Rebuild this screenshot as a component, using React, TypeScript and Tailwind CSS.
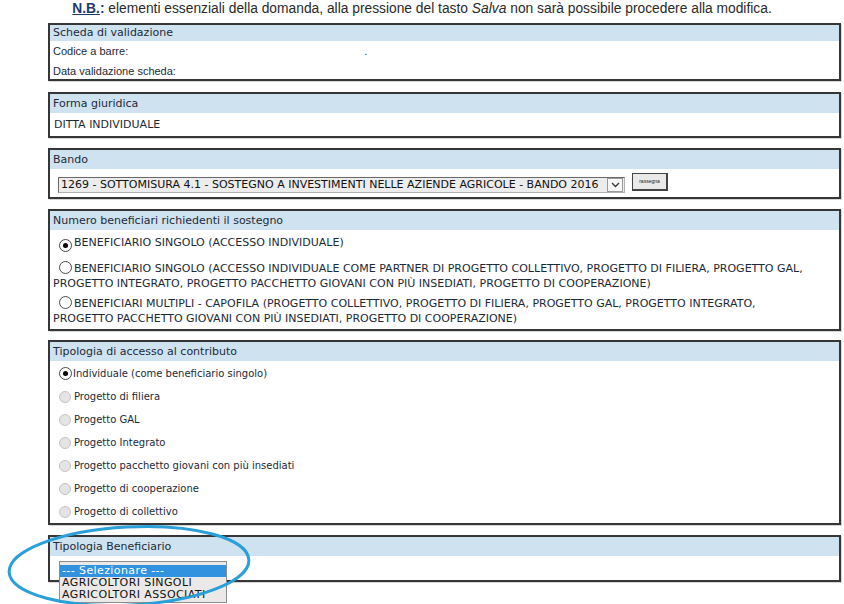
import React from "react";

function Radio({ checked = false, disabled = false }: { checked?: boolean; disabled?: boolean }) {
  if (disabled) {
    return (
      <span className="inline-block w-[12px] h-[12px] rounded-full border border-[#c4c4c4] bg-[#e4e4e4] shrink-0" />
    );
  }
  return (
    <span className="inline-flex items-center justify-center w-[13px] h-[13px] rounded-full border border-[#4a4a4a] bg-white shrink-0 align-[-2px]">
      {checked && <span className="block w-[5px] h-[5px] rounded-full bg-black" />}
    </span>
  );
}

function Box({ title, children, headerH = "h-[19px] leading-[19px]", extra = "" }: { title: string; children?: React.ReactNode; headerH?: string; extra?: string }) {
  return (
    <div className={"border-2 border-[#363636] bg-white shadow-[1px_1px_0_#d6d6d6] " + extra}>
      <div className={"bg-[#cfe2f0] pl-[3px] text-[11px] text-[#1c2a38] font-['DejaVu_Sans',sans-serif] " + headerH}>
        {title}
      </div>
      {children}
    </div>
  );
}

const accesso = [
  "Progetto di filiera",
  "Progetto GAL",
  "Progetto Integrato",
  "Progetto pacchetto giovani con più insediati",
  "Progetto di cooperazione",
  "Progetto di collettivo",
];

export default function App() {
  return (
    <div className="relative w-[844px] h-[604px] overflow-hidden bg-white">
      <div className="h-[18px] text-center text-[13.8px] leading-[18px] text-[#2a2a2a] font-['Liberation_Sans',Arial,sans-serif]">
        <span className="font-bold underline text-[#1d3a6b]">N.B.</span>
        <span className="font-bold text-[#1d3a6b]">:</span> elementi essenziali della domanda, alla pressione del tasto <i>Salva</i> non sarà possibile procedere alla modifica.
      </div>

      <div className="ml-[48px] mt-[5px] w-[793px] flex flex-col">
        {/* Scheda di validazione */}
        <Box title="Scheda di validazione" headerH="h-[16px] leading-[16px]">
          <div className="pl-[3px] text-[11px] text-[#1c2a38] font-['Liberation_Sans',Arial,sans-serif]">
            <div className="h-[20px] leading-[20px] flex">
              <span>Codice a barre:</span>
              <span className="ml-[236px]">.</span>
            </div>
            <div className="h-[18px] leading-[20px]">Data validazione scheda:</div>
          </div>
        </Box>

        {/* Forma giuridica */}
        <div className="mt-[11px]">
          <Box title="Forma giuridica">
            <div className="h-[23px] leading-[23px] pl-[4px] text-[11px] text-[#1c2a38] font-['DejaVu_Sans',sans-serif]">
              DITTA INDIVIDUALE
            </div>
          </Box>
        </div>

        {/* Bando */}
        <div className="mt-[10px]">
          <Box title="Bando">
            <div className="h-[28px] flex items-start pl-[8px]">
              <div className="mt-[8px] flex items-center w-[567px] h-[16px] border border-[#6a6a6a] border-r-[#b0b0b0] border-b-[#b0b0b0] bg-[#ececec]">
                <span className="flex-1 pl-[2px] text-[11px] leading-[14px] text-[#111] font-['DejaVu_Sans',sans-serif] whitespace-nowrap overflow-hidden">
                  1269 - SOTTOMISURA 4.1 - SOSTEGNO A INVESTIMENTI NELLE AZIENDE AGRICOLE - BANDO 2016
                </span>
                <span className="w-[16px] h-[14px] mr-[1px] border border-[#9a9a9a] bg-[#f7f7f7] flex items-center justify-center">
                  <svg width="9" height="6" viewBox="0 0 9 6">
                    <path d="M1 1 L4.5 4.5 L8 1" stroke="#333" strokeWidth="1.3" fill="none" />
                  </svg>
                </span>
              </div>
              <div className="mt-[4px] ml-[7px] w-[36px] h-[18px] border border-[#444] border-r-2 border-b-2 bg-[#e9e9e9] flex items-center justify-center text-[5px] leading-[5px] text-[#222] font-['Liberation_Sans',Arial,sans-serif]">
                rassegna
              </div>
            </div>
          </Box>
        </div>

        {/* Numero beneficiari */}
        <div className="mt-[10px]">
          <Box title="Numero beneficiari richiedenti il sostegno">
            <div className="pl-[3px] pb-[3px] text-[11px] leading-[15px] text-[#1c2a38] font-['DejaVu_Sans',sans-serif]">
              <div className="mt-[5px]">
                <span className="ml-[6px] mr-[2px]"><Radio checked /></span>BENEFICIARIO SINGOLO (ACCESSO INDIVIDUALE)
              </div>
              <div className="mt-[9px]">
                <span className="ml-[6px] mr-[2px]"><Radio /></span>BENEFICIARIO SINGOLO (ACCESSO INDIVIDUALE COME PARTNER DI PROGETTO COLLETTIVO, PROGETTO DI FILIERA, PROGETTO GAL,
                <br />
                PROGETTO INTEGRATO, PROGETTO PACCHETTO GIOVANI CON PIÙ INSEDIATI, PROGETTO DI COOPERAZIONE)
              </div>
              <div className="mt-[5px]">
                <span className="ml-[6px] mr-[2px]"><Radio /></span>BENEFICIARI MULTIPLI - CAPOFILA (PROGETTO COLLETTIVO, PROGETTO DI FILIERA, PROGETTO GAL, PROGETTO INTEGRATO,
                <br />
                PROGETTO PACCHETTO GIOVANI CON PIÙ INSEDIATI, PROGETTO DI COOPERAZIONE)
              </div>
            </div>
          </Box>
        </div>

        {/* Tipologia di accesso */}
        <div className="mt-[9px]">
          <Box title="Tipologia di accesso al contributo">
            <div className="pt-[1px] text-[10px] text-[#1c2a38] font-['DejaVu_Sans',sans-serif]">
              <div className="h-[23px] flex items-center pl-[9px]">
                <Radio checked />
                <span className="ml-[1px]">Individuale (come beneficiario singolo)</span>
              </div>
              {accesso.map((t) => (
                <div key={t} className="h-[23px] flex items-center pl-[9px]">
                  <Radio disabled />
                  <span className="ml-[3px]">{t}</span>
                </div>
              ))}
            </div>
          </Box>
        </div>

        {/* Tipologia Beneficiario */}
        <div className="mt-[10px]">
          <Box title="Tipologia Beneficiario" extra="relative">
            <div className="h-[24px]" />
            <div className="absolute left-[9px] top-[24px] z-10 w-[168px] border border-[#8c8c8c] bg-[#ebe9e7] pt-[3px] pb-[1px] text-[11px] leading-[12px] tracking-[0.4px] font-['DejaVu_Sans',sans-serif] text-[#111]">
              <div className="h-[12px] bg-[#3192e0] text-white pl-[2px] whitespace-nowrap">--- Selezionare ---</div>
              <div className="h-[12px] pl-[2px] whitespace-nowrap">AGRICOLTORI SINGOLI</div>
              <div className="h-[12px] pl-[2px] whitespace-nowrap">AGRICOLTORI ASSOCIATI</div>
            </div>
          </Box>
        </div>
      </div>

      <svg className="absolute left-0 top-0 pointer-events-none z-20" width="844" height="604" viewBox="0 0 844 604">
        <ellipse cx="129" cy="566" rx="120" ry="39" transform="rotate(-3 129 566)" stroke="#2a9fd8" strokeWidth="3" fill="none" />
      </svg>
    </div>
  );
}
